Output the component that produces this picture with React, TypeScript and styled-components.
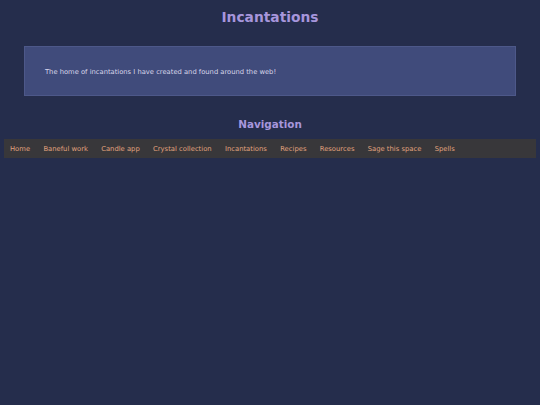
import React from "react";
import styled, { createGlobalStyle } from "styled-components";

const Global = createGlobalStyle`
  html, body { margin: 0; padding: 0; background: #252d4c; }
  body { font-family: "DejaVu Sans", Verdana, sans-serif; }
`;

const Page = styled.div`
  display: flex;
  flex-direction: column;
  padding: 0 4px;
  min-height: 405px;
  box-sizing: border-box;
`;

const Title = styled.h1`
  margin: 9px 0 0;
  text-align: center;
  font-size: 13.8px;
  font-weight: bold;
  color: #a796dc;
  line-height: 16px;
`;

const Intro = styled.section`
  margin: 21px 20px 0;
  background: #404b7b;
  border: 1px solid #4d5889;
  height: 50px;
  box-sizing: border-box;
  display: flex;
  align-items: center;
  padding: 1px 20px 0;
`;

const IntroText = styled.p`
  margin: 0;
  font-size: 6.75px;
  color: #d8d6ea;
`;

const Heading = styled.h2`
  margin: 21px 0 0;
  text-align: center;
  font-size: 10.4px;
  font-weight: bold;
  color: #a796dc;
  line-height: 14px;
`;

const Nav = styled.nav`
  margin-top: 8px;
  background: #38373a;
  height: 19px;
  display: flex;
  align-items: center;
  padding: 0 6px;
  gap: 13.3px;
`;

const NavLink = styled.a`
  font-size: 6.8px;
  color: #e0a27e;
  text-decoration: none;
`;

const links = [
  "Home",
  "Baneful work",
  "Candle app",
  "Crystal collection",
  "Incantations",
  "Recipes",
  "Resources",
  "Sage this space",
  "Spells",
];

export default function App() {
  return (
    <>
      <Global />
      <Page>
        <Title>Incantations</Title>
        <Intro>
          <IntroText>The home of incantations I have created and found around the web!</IntroText>
        </Intro>
        <Heading>Navigation</Heading>
        <Nav>
          {links.map((l) => (
            <NavLink key={l} href="#">{l}</NavLink>
          ))}
        </Nav>
      </Page>
    </>
  );
}
